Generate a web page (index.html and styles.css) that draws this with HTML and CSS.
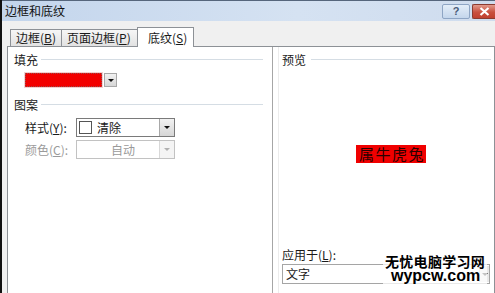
FILE: index.html
```html
<!DOCTYPE html>
<html lang="zh-CN">
<head>
    <meta charset="UTF-8">
    <title>边框和底纹</title>
    <link rel="stylesheet" href="styles.css">
</head>
<body>
    <div class="window">
        <div class="titlebar">
            <span class="title">边框和底纹</span>
            <div class="caption-btns">
                <span class="btn-help">?</span>
                <span class="btn-close">
                    <svg width="11" height="9" viewBox="0 0 11 9"><path d="M1.5 1 L9.5 8 M9.5 1 L1.5 8" stroke="#fff" stroke-width="2.2" fill="none"/></svg>
                </span>
            </div>
        </div>
        <div class="tabs">
            <span class="tab tab-border">边框(<u>B</u>)</span>
            <span class="tab tab-page">页面边框(<u>P</u>)</span>
            <span class="tab active">底纹(<u>S</u>)</span>
        </div>
        <div class="panel">
            <div class="left-col">
                <div class="group-title">填充</div>
                <div class="fill-row">
                    <span class="swatch"></span>
                    <span class="drop-btn small"><span class="arrow"></span></span>
                </div>
                <div class="group-title pattern-title">图案</div>
                <div class="field">
                    <label>样式(<u>Y</u>):</label>
                    <div class="combo">
                        <span class="pat-box"></span>
                        <span class="combo-text">清除</span>
                        <span class="drop-btn"><span class="arrow"></span></span>
                    </div>
                </div>
                <div class="field disabled">
                    <label>颜色(<u>C</u>):</label>
                    <div class="combo">
                        <span class="combo-text centered">自动</span>
                        <span class="drop-btn"><span class="arrow"></span></span>
                    </div>
                </div>
            </div>
            <div class="right-col">
                <div class="preview">
                    <div class="group-title">预览</div>
                    <div class="sample"><span>属牛虎兔</span></div>
                    <div class="apply-label">应用于(<u>L</u>):</div>
                    <div class="combo wide">
                        <span class="combo-text">文字</span>
                        <span class="drop-btn flat"><span class="arrow"></span></span>
                    </div>
                    <div class="watermark">
                        <div class="wm-cn">无忧电脑学习网</div>
                        <div class="wm-en">wypcw.com</div>
                    </div>
                </div>
            </div>
        </div>
    </div>
</body>
</html>
```

FILE: styles.css
```css
body, html {
    margin: 0;
    padding: 0;
    background-color: #f0f0f0;
    font-family: "Noto Sans CJK SC", "Liberation Sans", sans-serif;
    font-size: 12px;
    color: #1a1a1a;
    overflow: hidden;
}
u {
    text-decoration: underline;
}
.window {
    width: 493px;
    height: 293px;
    border-left: 2px solid #111;
    background-color: #f0f0f0;
    overflow: hidden;
}
.titlebar {
    height: 20px;
    border-top: 1px solid #56667c;
    background: linear-gradient(to right, #c3d5ec, #d5e2f2 60%, #cfdcee);
    display: flex;
    align-items: center;
    justify-content: space-between;
}
.title {
    padding-left: 3px;
    font-size: 12px;
    line-height: 14px;
    color: #111;
}
.caption-btns {
    display: flex;
    gap: 2px;
    align-self: flex-start;
    margin-top: 3px;
}
.btn-help {
    width: 26px;
    height: 13px;
    border: 1px solid #8ea5c4;
    border-radius: 2px;
    background: linear-gradient(#e3edf8, #c4d6ec);
    color: #4a5c78;
    font-family: "Liberation Sans", sans-serif;
    font-weight: bold;
    font-size: 11px;
    line-height: 13px;
    text-align: center;
}
.btn-close {
    width: 22px;
    height: 13px;
    border: 1px solid #8b3b30;
    border-right: none;
    border-radius: 2px 0 0 2px;
    background: linear-gradient(#e29a8c, #c9503f 55%, #c0402f);
    display: flex;
    align-items: center;
    justify-content: center;
}
.tabs {
    height: 25px;
    padding-left: 8px;
    display: flex;
    align-items: flex-end;
}
.tab {
    height: 16px;
    border: 1px solid #8d9196;
    border-bottom: none;
    border-right: none;
    background: linear-gradient(#f6f6f6, #e2e2e2);
    font-size: 12px;
    line-height: 16px;
    box-sizing: content-box;
}
.tab-border {
    width: 45px;
    padding-left: 5px;
}
.tab-page {
    width: 70px;
    padding-left: 5px;
}
.tab.active {
    width: 45px;
    height: 19px;
    padding-left: 10px;
    border-right: 1px solid #8d9196;
    background: #ffffff;
    line-height: 19px;
    margin-bottom: -1px;
    position: relative;
}
.panel {
    margin-left: 5px;
    height: 260px;
    border: 1px solid #8d9196;
    background: #ffffff;
    display: flex;
}
.left-col {
    width: 264px;
    padding-top: 6px;
}
.group-title {
    display: flex;
    align-items: center;
    padding-left: 6px;
    padding-right: 9px;
    line-height: 14px;
    height: 14px;
}
.group-title::after {
    content: "";
    flex: 1;
    border-top: 1px solid #d5dde4;
    margin-left: 3px;
    margin-top: -1px;
}
.fill-row {
    display: flex;
    gap: 2px;
    margin: 6px 0 0 17px;
}
.swatch {
    width: 75px;
    height: 12px;
    background: #f20000;
    border: 1px dotted #9a5050;
    outline: 1px solid #f3d0d0;
}
.drop-btn {
    width: 15px;
    height: 17px;
    background: linear-gradient(#f2f2f2, #d6d6d6);
    border-left: 1px solid #a8a8a8;
    display: flex;
    align-items: center;
    justify-content: center;
    box-sizing: border-box;
}
.drop-btn.small {
    width: 13px;
    height: 14px;
    border: 1px solid #a8a8a8;
}
.arrow {
    width: 0;
    height: 0;
    border-left: 3px solid transparent;
    border-right: 3px solid transparent;
    border-top: 3px solid #111;
}
.pattern-title {
    margin-top: 11px;
}
.field {
    display: flex;
    align-items: center;
    margin-top: 6px;
    padding-left: 17px;
}
.field + .field {
    margin-top: 3px;
}
.field label {
    width: 51px;
    line-height: 14px;
}
.combo {
    width: 97px;
    height: 17px;
    border: 1px solid #7a7a7a;
    display: flex;
    align-items: center;
    background: #fff;
}
.combo .drop-btn {
    margin-left: auto;
}
.pat-box {
    width: 13px;
    height: 13px;
    border: 1px solid #555;
    margin-left: 2px;
    box-sizing: border-box;
}
.combo-text {
    padding-left: 5px;
    line-height: 14px;
}
.combo-text.centered {
    flex: 1;
    text-align: center;
    padding-left: 10px;
}
.disabled {
    color: #9a9a9a;
}
.disabled .combo {
    border-color: #c2c2c2;
}
.disabled .drop-btn {
    background: #f4f4f4;
    border-left-color: #d8d8d8;
}
.disabled .arrow {
    border-top-color: #b0b0b0;
}
.right-col {
    flex: 1;
    border-left: 1px solid #a6a6a6;
    padding-left: 5px;
    padding-right: 2px;
}
.preview {
    height: 100%;
    border-left: 1px solid #ececec;
    padding-top: 6px;
    position: relative;
    box-sizing: border-box;
}
.preview .group-title {
    padding-left: 3px;
    padding-right: 1px;
}
.preview .group-title::after {
    margin-left: 5px;
}
.sample {
    margin-top: 78px;
    display: flex;
    justify-content: center;
    padding-left: 11px;
}
.sample span {
    background: #f00000;
    color: #2a0000;
    font-size: 15px;
    line-height: 18px;
    height: 18px;
    letter-spacing: 1.5px;
    padding: 0 1px 0 3px;
}
.apply-label {
    margin-top: 85px;
    padding-left: 3px;
    line-height: 14px;
}
.combo.wide {
    width: 206px;
    height: 18px;
    margin-left: 3px;
    margin-top: 2px;
    border-color: #a5a5a5;
}
.combo.wide .combo-text {
    padding-left: 3px;
}
.drop-btn.flat {
    width: 10px;
    height: 16px;
    background: #e8e8e8;
    border-left: 1px solid #c8c8c8;
}
.watermark {
    position: absolute;
    left: 104px;
    top: 207px;
    color: #000;
    font-weight: bold;
    background: rgba(255, 255, 255, 0.75);
    padding: 0 2px;
}
.wm-cn {
    font-size: 14px;
    line-height: 14px;
    height: 14px;
    letter-spacing: 0.3px;
}
.wm-en {
    font-family: "Liberation Sans", sans-serif;
    font-size: 16px;
    line-height: 16px;
    height: 16px;
    padding-left: 6px;
}
```
